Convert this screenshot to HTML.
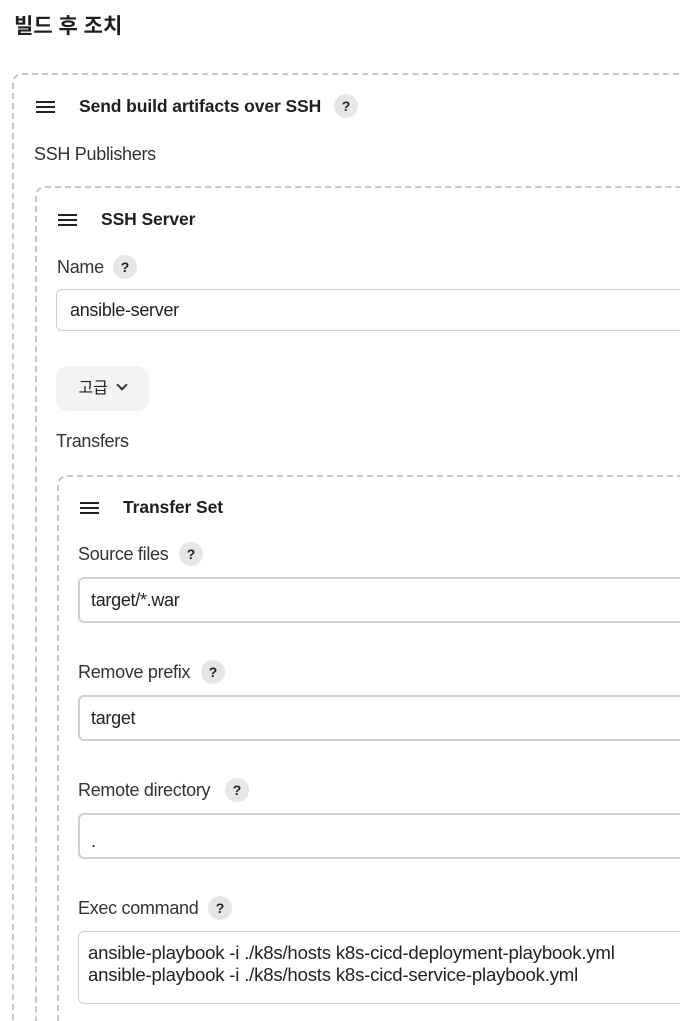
<!DOCTYPE html>
<html><head><meta charset="utf-8"><style>
body{margin:0;width:680px;height:1011px;overflow:hidden;background:#fff;font-family:"Liberation Sans","Noto Sans CJK KR",sans-serif;color:#1f1f23;position:relative}
.a{position:absolute;white-space:nowrap}
.box{position:absolute;border:2px dashed #c5c9cc;border-right:none;border-bottom:none;border-radius:10px 0 0 0;right:-10px;bottom:-10px}
.hb{position:absolute;width:19px;height:12px}
.hb i{display:block;height:2px;background:#222;margin-bottom:3px}
.h{font-weight:bold;font-size:17.5px;letter-spacing:-0.1px;line-height:20px}
.l{font-size:18px;color:#333;line-height:20px;letter-spacing:-0.3px}
.q{position:absolute;width:24px;height:24px;border-radius:50%;background:#e6e6e6;font-weight:bold;font-size:14px;text-align:center;line-height:24px;color:#222}
.in{position:absolute;left:0;right:-10px;border:2px solid #c9d1d5;border-radius:6px;box-sizing:border-box;font-size:18px;letter-spacing:-0.3px;color:#222;padding-left:11px}
</style></head><body>
<div class="a" style="left:14px;top:10px;font-size:21px;font-weight:bold">빌드 후 조치</div>

<div class="box" style="left:12px;top:73px"></div>
<div class="hb" style="left:36px;top:101px"><i></i><i></i><i></i></div>
<div class="a h" style="left:79px;top:96px">Send build artifacts over SSH</div>
<div class="q" style="left:334px;top:94px">?</div>
<div class="a l" style="left:34px;top:144px">SSH Publishers</div>

<div class="box" style="left:35px;top:186px"></div>
<div class="hb" style="left:58px;top:214px"><i></i><i></i><i></i></div>
<div class="a h" style="left:101px;top:209px">SSH Server</div>
<div class="a l" style="left:57px;top:257px">Name</div>
<div class="q" style="left:113px;top:255px">?</div>
<div class="in" style="left:56px;top:289px;height:42px;line-height:40px;border-width:1px;padding-left:13px">ansible-server</div>
<div class="a" style="left:56px;top:366px;width:93px;height:45px;background:#f3f3f5;border-radius:12px;font-size:16px;line-height:45px;text-align:center">고급 <span style="display:inline-block;width:6px;height:6px;border-right:2px solid #333;border-bottom:2px solid #333;transform:rotate(45deg);margin:0 0 4px 6px"></span></div>
<div class="a l" style="left:56px;top:431px">Transfers</div>

<div class="box" style="left:57px;top:475px"></div>
<div class="hb" style="left:80px;top:502px"><i></i><i></i><i></i></div>
<div class="a h" style="left:123px;top:497px">Transfer Set</div>

<div class="a l" style="left:78px;top:544px">Source files</div>
<div class="q" style="left:179px;top:542px">?</div>
<div class="in" style="left:78px;top:577px;height:46px;line-height:43px">target/*.war</div>

<div class="a l" style="left:78px;top:662px">Remove prefix</div>
<div class="q" style="left:201px;top:660px">?</div>
<div class="in" style="left:78px;top:695px;height:46px;line-height:43px">target</div>

<div class="a l" style="left:78px;top:780px">Remote directory</div>
<div class="q" style="left:225px;top:778px">?</div>
<div class="in" style="left:78px;top:813px;height:46px;line-height:53px">.</div>

<div class="a l" style="left:78px;top:898px">Exec command</div>
<div class="q" style="left:208px;top:896px">?</div>
<div class="in" style="left:78px;top:931px;height:73px;border-width:1px;padding:10px 0 0 9px;font-size:18.6px;letter-spacing:-0.2px;line-height:22px;white-space:nowrap">ansible-playbook -i ./k8s/hosts k8s-cicd-deployment-playbook.yml<br>ansible-playbook -i ./k8s/hosts k8s-cicd-service-playbook.yml</div>
</body></html>
